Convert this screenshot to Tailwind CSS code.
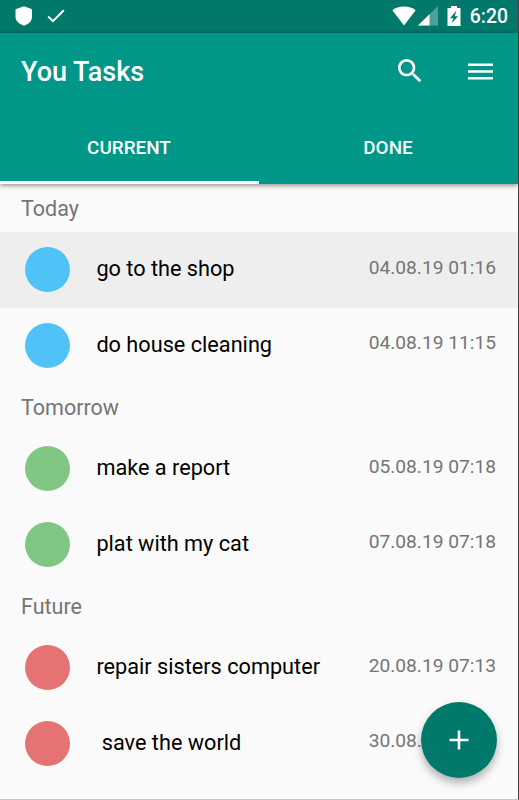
<!DOCTYPE html>
<html lang="en">
<head>
  <meta charset="utf-8" />
  <meta content="width=device-width, initial-scale=1.0" name="viewport" />
  <title>You Tasks</title>
  <script src="https://cdn.jsdelivr.net/npm/@tailwindcss/browser@4"></script>
</head>
<body class="bg-[#fafafa] font-['Roboto',sans-serif] overflow-hidden">
  <div class="relative w-[519px] h-[800px] border-r border-[#424242] border-b border-b-[#c8c8c8] overflow-hidden flex flex-col">
    <!-- Status bar -->
    <div class="h-[33px] shrink-0 bg-[#00796b] text-white flex items-center justify-between pl-[15px] pr-[10px]">
      <div class="flex items-center pb-px">
        <svg class="w-[18px] h-[20px]" viewBox="0 0 18 20" fill="currentColor"><path d="M9 .3 17 3.2V11c0 4-3.500 7.300-8 8.700C4.500 18.300.500 15 .500 11V3.200z" /></svg>
        <svg class="w-[18px] h-[14px] ml-[14px]" viewBox="0 0 18 14" fill="none" stroke="currentColor" stroke-width="2"><path d="M1.200 7.500 6 12.200 16.800 1.200" /></svg>
      </div>
      <div class="flex items-center">
        <svg class="w-[24px] h-[20px] mb-px" viewBox="0 0 24 20" fill="currentColor"><path d="M12 19.500.300 4.300C3.500 1.700 7.500.500 12 .500s8.500 1.200 11.700 3.800z" /></svg>
        <svg class="w-[20px] h-[20px] ml-[2px] mb-px" viewBox="0 0 20 20" fill="currentColor"><path d="M20 0v19.500H0z" opacity=".3" /><path d="M11.500 8.300v11.200H0z" /></svg>
        <svg class="w-[14px] h-[20px] ml-[9px] mb-px" viewBox="0 0 14 20"><path fill="#fff" d="M4 0h6v2h3.500v18H.500V2H4z" /><path fill="#00796b" d="M9.500 4.500 3 12.200h3.500L4.500 17.500l6.500-7.300H7.700z" /></svg>
        <span class="ml-[9px] text-[19.4px] leading-[33px] font-medium">6:20</span>
      </div>
    </div>
    <!-- App bar -->
    <div class="relative z-10 h-[151px] shrink-0 bg-[#009688] text-white shadow-[0_1px_5px_rgba(0,0,0,0.5)] flex flex-col">
      <div class="h-[76px] flex items-center pl-[21px] pr-[25px]">
        <h1 class="flex-1 pt-[2px] text-[27px] font-medium">You Tasks</h1>
        <svg class="w-[32px] h-[32px] mr-[42px] mb-px" viewBox="0 0 24 24" fill="currentColor"><path d="M15.500 14h-.79l-.28-.27C15.410 12.590 16 11.110 16 9.500 16 5.910 13.090 3 9.500 3S3 5.910 3 9.500 5.910 16 9.500 16c1.610 0 3.090-.59 4.230-1.570l.27.28v.79l5 4.990L20.490 19l-4.990-5zm-6 0C7.010 14 5 11.990 5 9.500S7.010 5 9.500 5 14 7.010 14 9.500 11.990 14 9.500 14z" /></svg>
        <svg class="w-[25px] h-[17px]" viewBox="0 0 25 17" fill="currentColor"><path d="M0 .500h25V3H0zM0 7.200h25v2.600H0zM0 14h25v2.500H0z" /></svg>
      </div>
      <div class="flex-1 grid grid-cols-2 text-[18.9px] font-medium text-center leading-[77px]">
        <div class="h-[75px] pr-px border-b-[3px] border-white">CURRENT</div>
        <div class="h-[75px] pr-px text-[#f2faf9]">DONE</div>
      </div>
    </div>
    <!-- Task list -->
    <div id="task-list" class="flex-1 pt-[0.4px]"></div>
    <!-- Add button -->
    <div class="absolute left-[421px] top-[702px] w-[76px] h-[76px] rounded-full bg-[#00796b] shadow-[0_5px_8px_rgba(0,0,0,0.3)] flex items-center justify-center">
      <svg class="w-[20px] h-[20px] mr-px" viewBox="0 0 20 20" fill="#fff"><path d="M8.700.500h2.600v8.200h8.200v2.600h-8.200v8.200H8.700v-8.200H.500V8.700h8.200z" /></svg>
    </div>
  </div>

  <script>
    const sections = [
      { name: 'Today', color: 'bg-[#4fc3f7]', tasks: [
        { title: 'go to the shop', date: '04.08.19 01:16', active: true },
        { title: 'do house cleaning', date: '04.08.19 11:15' },
      ] },
      { name: 'Tomorrow', color: 'bg-[#81c784]', tasks: [
        { title: 'make a report', date: '05.08.19 07:18' },
        { title: 'plat with my cat', date: '07.08.19 07:18' },
      ] },
      { name: 'Future', color: 'bg-[#e57373]', tasks: [
        { title: 'repair sisters computer', date: '20.08.19 07:13' },
        { title: ' save the world', date: '30.08.19 07:13' },
      ] },
    ];

    const list = document.getElementById('task-list');
    sections.forEach(section => {
      let html = `<h2 class="h-[47.8px] pl-[21px] text-[21.5px] leading-[50px] text-[#757575]">${section.name}</h2>`;
      section.tasks.forEach(task => {
        html += `
          <div class="h-[75.6px] flex items-center pl-[25px] pr-[22px] ${task.active ? 'bg-[#eeeeee]' : ''}">
            <div class="w-[45.4px] h-[45.4px] mb-[0.6px] rounded-full ${section.color}"></div>
            <p class="flex-1 ml-[26px] pb-[1.5px] text-[21.7px] whitespace-pre text-black">${task.title}</p>
            <p class="text-[19.2px] text-[#757575] pb-[4px]">${task.date}</p>
          </div>
        `;
      });
      list.innerHTML += html;
    });
  </script>
</body>
</html>
